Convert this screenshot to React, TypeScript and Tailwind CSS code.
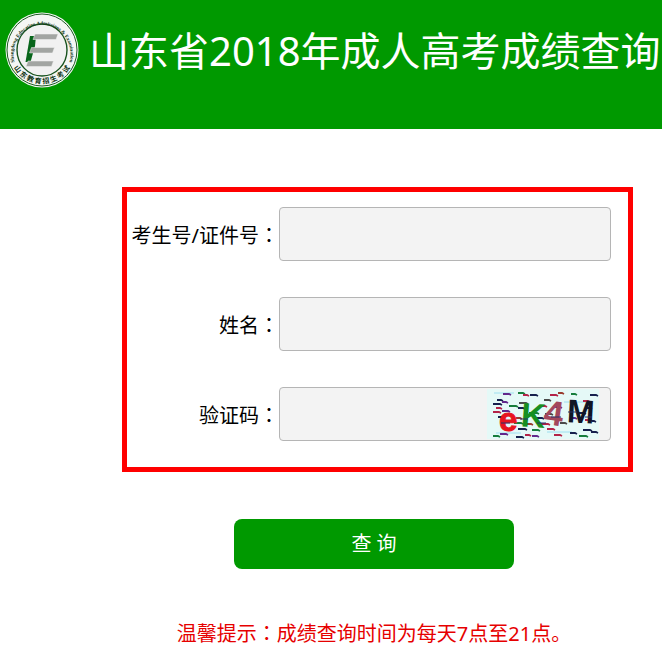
import React from "react";

const sans = "font-['Noto_Sans','Noto_Sans_CJK_SC',sans-serif]";

function Colon() {
  return (
    <span lang="zh-TW" className="font-['Noto_Sans_CJK_TC',sans-serif]">
      ：
    </span>
  );
}

function Logo() {
  return (
    <svg viewBox="0 0 74 76" className="h-[76px] w-[74px] shrink-0" role="img" aria-label="山东教育招生考试">
      <defs>
        <path id="ring-top" d="M 9.5 50 A 28.5 29.5 0 1 1 64.5 50" />
        <path id="ring-bottom" d="M 4.5 44 A 33 33.5 0 0 0 69.5 44" />
      </defs>
      <ellipse cx="37" cy="38" rx="36.5" ry="37.5" fill="#f4f6f4" />
      <ellipse cx="37" cy="38" rx="35" ry="36" fill="none" stroke="#1c5a22" strokeWidth="1" />
      <ellipse cx="37" cy="38" rx="25" ry="26" fill="#f1f1f1" stroke="#17521d" strokeWidth="1.4" />
      <g fill="#0d3312">
        <text fontSize="5" fontWeight="700" className="font-['Liberation_Serif',serif]">
          <textPath href="#ring-top" startOffset="50%" textAnchor="middle">
            Shangdong Education Admissions &amp; Examination
          </textPath>
        </text>
        <text fontSize="7" fontWeight="700" className="font-['Noto_Sans_CJK_SC',sans-serif]">
          <textPath href="#ring-bottom" startOffset="50%" textAnchor="middle">
            山 东 教 育 招 生 考 试
          </textPath>
        </text>
      </g>
      <path d="M25 24H31L30 34L25.5 50H20.5Z" fill="#07651a" />
      <g fill="#a2a5a2" stroke="#f1f1f1" strokeWidth=".5">
        <path d="M30 22H53L51 27.5H28Z" />
        <path d="M26.5 35.5H49.5L47.5 41H24.5Z" />
        <path d="M23 49H48.5L46.5 54.5H21Z" />
      </g>
    </svg>
  );
}

const inks = ["#16204d", "#b32448", "#167d3c", "#62288b", "#4a4a4a", "#9a3c2f"];
const streaks: [number, number, number, number][] = [
  [14, 5, 8, 3], [29, 4, 7, 2], [34, 6, 6, 1], [41, 6, 8, 0], [61, 6, 8, 1], [69, 4, 6, 5], [82, 5, 6, 2], [101, 6, 8, 0],
  [8, 11, 6, 0], [4, 15, 9, 0], [13, 13, 6, 3], [30, 14, 9, 4], [55, 11, 7, 4], [94, 12, 7, 1],
  [7, 19, 6, 1], [20, 17, 9, 2], [29, 19, 7, 0], [50, 17, 8, 1], [66, 18, 7, 3], [98, 19, 5, 0],
  [4, 23, 8, 1], [13, 22, 8, 3], [40, 24, 10, 2], [56, 25, 8, 4], [88, 24, 9, 0],
  [9, 28, 7, 0], [27, 29, 6, 5], [46, 29, 9, 0], [61, 30, 7, 2], [81, 29, 7, 3], [96, 31, 7, 1],
  [25, 34, 9, 2], [36, 35, 8, 5], [52, 35, 9, 1], [71, 34, 7, 4], [103, 32, 4, 0],
  [13, 39, 6, 5], [29, 40, 9, 0], [43, 41, 8, 2], [58, 40, 8, 1], [94, 41, 9, 0], [102, 43, 7, 0],
  [4, 47, 7, 2], [11, 45, 8, 3], [27, 48, 8, 0], [36, 46, 6, 1], [43, 47, 7, 3], [65, 46, 8, 1], [81, 44, 7, 0], [90, 47, 9, 2],
];

function Captcha() {
  return (
    <svg viewBox="-2 0 112 50" className="h-[50px] w-[112px]">
      <rect x="-2" width="112" height="50" fill="#e5f9f7" />
      <path d="M5 4h20M7 44h25M58 43h25M75 13h22" stroke="#9edff0" strokeWidth="1" />
      {streaks.map(([x, y, w, ink], i) => (
        <path key={i} d={`M${x} ${y}h${w - 2}l2 1`} fill="none" stroke={inks[ink]} strokeWidth="1.8" />
      ))}
      <g fontWeight="700" className="font-['Liberation_Sans',sans-serif]">
        <text x="10" y="42" fontSize="33" fill="#e8151f" stroke="#e8151f">e</text>
        <text x="32" y="38" fontSize="34" fill="#168f22" transform="rotate(4 42 26)">K</text>
        <text x="55" y="36" fontSize="35" fill="#a3485c" transform="rotate(8 64 25)">4</text>
        <text x="78" y="34" fontSize="33" fill="#101626" transform="rotate(3 90 24)">M</text>
      </g>
      <path d="M12 34h9m10-4h8m9 4h9m5-6h10m7-5h9m8 5h7" stroke="#263068" strokeWidth="1" />
    </svg>
  );
}

interface FieldProps {
  id: string;
  label: string;
  children?: React.ReactNode;
}

function Field({ id, label, children }: FieldProps) {
  return (
    <div className="flex items-center">
      <label htmlFor={id} className="w-[152px] shrink-0 pt-0.5 text-right text-xl leading-7 whitespace-nowrap text-black">
        {label}
        <Colon />
      </label>
      <div className="relative min-w-0 flex-1">
        <input
          id={id}
          type="text"
          className="block h-[54px] w-full rounded-[4px] border border-[#b5b5b5] bg-[#f3f3f3] px-3 text-xl outline-none"
        />
        {children}
      </div>
    </div>
  );
}

export default function App() {
  return (
    <div className={`min-h-screen bg-white ${sans}`} lang="zh-CN">
      <header className="flex h-[129px] items-start gap-2.5 overflow-hidden bg-[#009900] pt-3 pl-[5px]">
        <Logo />
        <h1 className="text-[40px] leading-[78px] font-normal whitespace-nowrap text-white">
          山东省2018年成人高考成绩查询
        </h1>
      </header>
      <main>
        <form onSubmit={(e) => e.preventDefault()}>
          <div className="mt-[58px] mr-[29px] ml-[122px] flex flex-col gap-9 border-5 border-[#ff0000] pt-[15px] pr-[17px] pb-[26px]">
            <Field id="candidate" label="考生号/证件号" />
            <Field id="name" label="姓名" />
            <Field id="code" label="验证码">
              <button type="button" aria-label="换一张验证码" className="absolute top-[2px] right-3">
                <Captcha />
              </button>
            </Field>
          </div>
          <div className="mt-[47px] mr-[34px] ml-[120px] flex justify-center">
            <button type="submit" className="h-[50px] w-[280px] rounded-lg bg-[#009900] text-xl text-white">
              查 询
            </button>
          </div>
        </form>
        <p className="mt-[50px] mr-[34px] ml-[120px] text-center text-xl leading-7 whitespace-nowrap text-[#e60000]">
          温馨提示
          <Colon />
          成绩查询时间为每天7点至21点。
        </p>
      </main>
    </div>
  );
}
